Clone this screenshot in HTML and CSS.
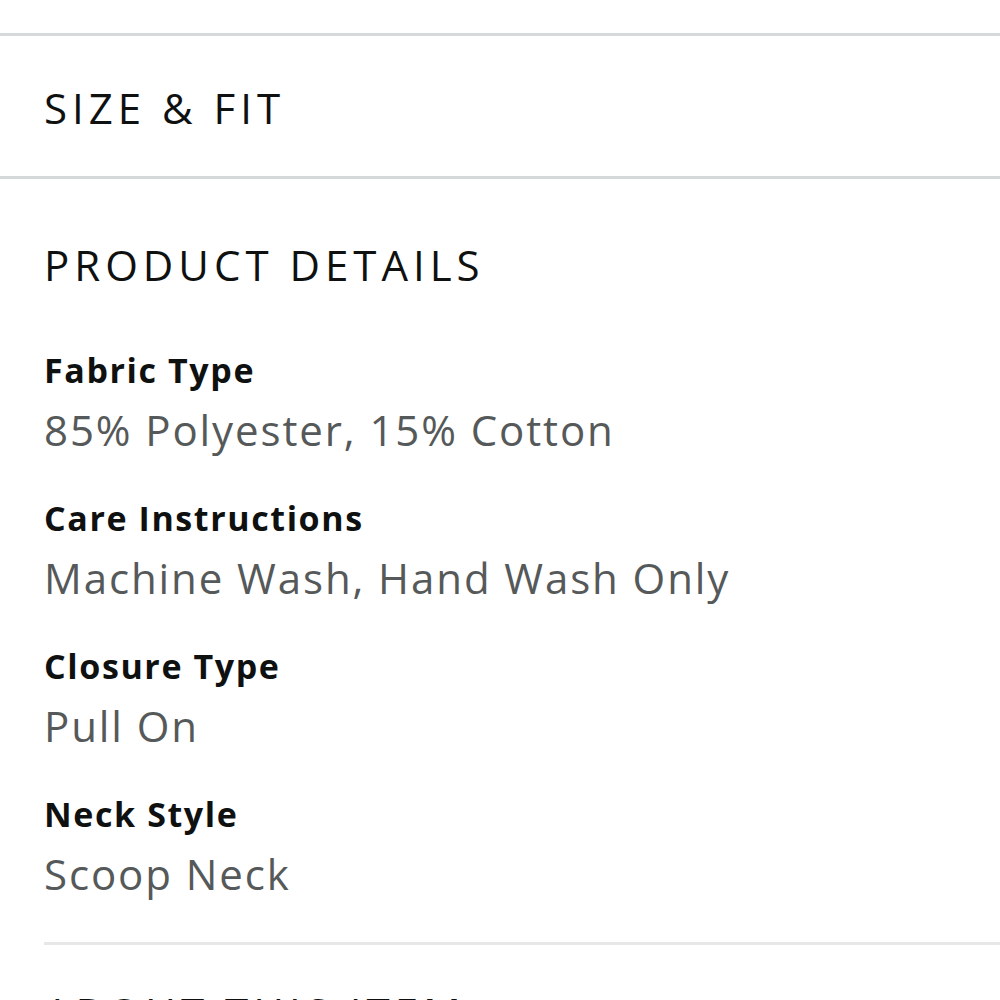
FILE: index.html
```html
<!DOCTYPE html>
<html>
<head>
<meta charset="utf-8">
<link rel="stylesheet" href="styles.css">
</head>
<body>
<div class="page">
  <div class="rule rule-top"></div>
  <section class="collapsed">
    <h2 class="section-title">SIZE &amp; FIT</h2>
  </section>
  <div class="rule"></div>
  <section class="details">
    <h2 class="section-title details-title">PRODUCT DETAILS</h2>
    <dl class="attrs">
      <div class="attr">
        <dt class="attr-label">Fabric Type</dt>
        <dd class="attr-value">85% Polyester, 15% Cotton</dd>
      </div>
      <div class="attr">
        <dt class="attr-label">Care Instructions</dt>
        <dd class="attr-value">Machine Wash, Hand Wash Only</dd>
      </div>
      <div class="attr">
        <dt class="attr-label">Closure Type</dt>
        <dd class="attr-value">Pull On</dd>
      </div>
      <div class="attr">
        <dt class="attr-label">Neck Style</dt>
        <dd class="attr-value">Scoop Neck</dd>
      </div>
    </dl>
    <div class="rule rule-inset"></div>
    <h2 class="section-title about-title">ABOUT THIS ITEM</h2>
  </section>
</div>
</body>
</html>
```

FILE: styles.css
```css
html, body {
  margin: 0;
  padding: 0;
  background: #ffffff;
}

.page {
  font-family: "Open Sans", "Noto Sans", "Liberation Sans", sans-serif;
  color: #0f1111;
  height: 1000px;
  overflow: hidden;
}

.rule {
  height: 3px;
  background: #d5d9d9;
}

.rule-top {
  margin-top: 33px;
}

.section-title {
  margin: 0;
  font-size: 42px;
  font-weight: 400;
  line-height: 52px;
  letter-spacing: 5px;
  color: #0f1111;
}

.collapsed {
  height: 140px;
  box-sizing: border-box;
  padding: 4px 0 0 44px;
  display: flex;
  align-items: center;
}

.details {
  padding-left: 44px;
}

.details-title {
  margin-top: 60px;
}

.attrs {
  margin: 55px 0 0 0;
  display: flex;
  flex-direction: column;
  gap: 28px;
}

.attr-label {
  font-size: 34px;
  font-weight: 700;
  line-height: 48px;
  letter-spacing: 1.6px;
  color: #0f1111;
}

.attr-value {
  margin: 0;
  font-size: 42px;
  line-height: 72px;
  letter-spacing: 1.9px;
  color: #565959;
}

.rule-inset {
  margin-top: 32px;
  background: #e7e7e7;
}

.about-title {
  margin-top: 42px;
}
```
